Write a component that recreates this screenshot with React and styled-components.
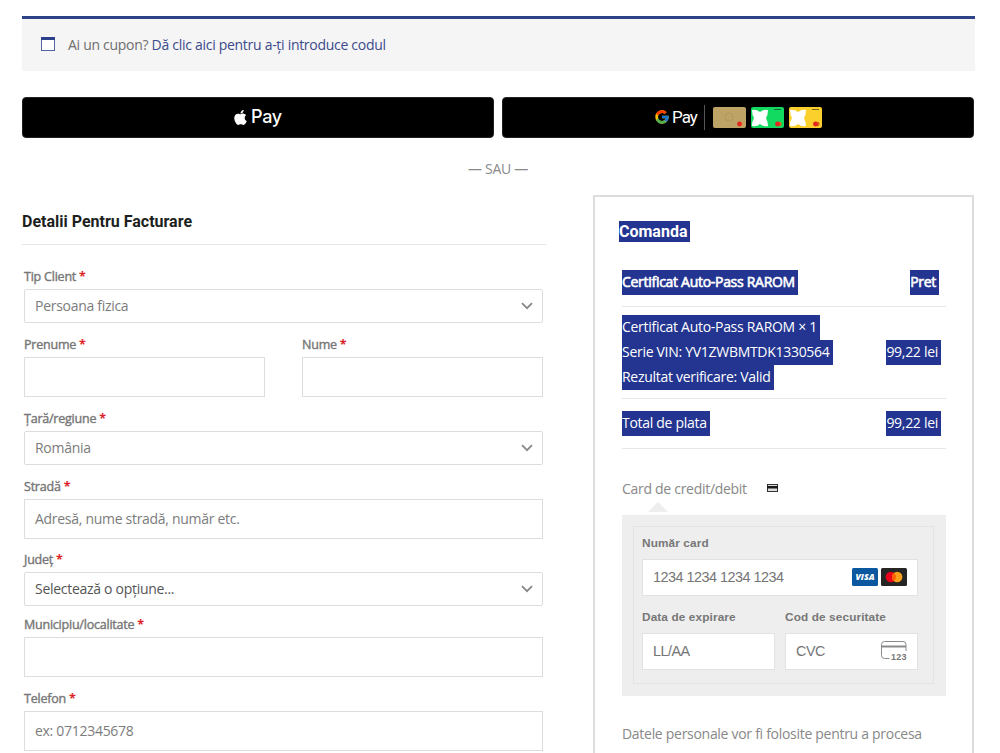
import React from 'react';
import styled, { createGlobalStyle } from 'styled-components';
import { FaApple } from 'react-icons/fa';
import { FcGoogle } from 'react-icons/fc';

const GlobalStyle = createGlobalStyle`
  * {
    box-sizing: border-box;
  }
  body {
    margin: 0;
    background: #fff;
    color: #777;
    font-family: 'Open Sans', sans-serif;
    font-size: 14px;
    letter-spacing: -0.29px;
  }
`;

const Page = styled.div`
  height: 753px;
  overflow: hidden;
  padding: 16px 26px 0 22px;
`;

const Coupon = styled.div`
  display: flex;
  align-items: center;
  height: 55px;
  margin-right: -1px;
  padding: 0 0 2px 19px;
  border-top: 3px solid #2e4287;
  background: #f5f5f5;
  color: #6f6f6f;
  white-space: pre;

  svg {
    margin-right: 13px;
  }
  a {
    color: #3c4a8c;
  }
`;

const Wallets = styled.div`
  display: flex;
  gap: 8px;
  margin-top: 26px;
`;

const WalletButton = styled.button`
  display: flex;
  flex: 1;
  align-items: center;
  justify-content: center;
  height: 41px;
  padding: 0 0 1px;
  border: 1px solid #222;
  border-radius: 4px;
  background: #000;
  color: #fff;
  font-family: ${({ $font }) => $font}, sans-serif;
  font-size: ${({ $size }) => $size};
  font-weight: ${({ $weight = 400 }) => $weight};
  letter-spacing: ${({ $spacing }) => $spacing};
  line-height: 20px;
`;

const AppleMark = styled.span`
  display: flex;
  align-items: center;
  gap: 2px;
  margin-right: 2px;
`;

const GoogleMark = styled.span`
  display: flex;
  align-items: center;
  gap: 2px;
  height: 25px;
  margin-right: 8px;
  padding-right: 7px;
  border-right: 1px solid #555;
`;

const MiniCards = styled.span`
  display: flex;
  gap: 5px;
`;

const Separator = styled.p`
  margin: 21px 0 16px;
  color: #8a8a8a;
  line-height: 20px;
  text-align: center;
`;

const Columns = styled.div`
  display: flex;
  justify-content: space-between;
`;

const Billing = styled.form`
  width: 524px;
`;

const Title = styled.h3`
  margin: 0;
  color: #1d1f20;
  font: bold 16px/20px Roboto, sans-serif;
  letter-spacing: 0;
`;

const BillingTitle = styled(Title)`
  height: 50px;
  padding-top: 17px;
  border-bottom: 1px solid #e6e6e6;
`;

const Fields = styled.div`
  padding: 19px 3px 0 2px;
`;

const FieldRow = styled.div`
  display: flex;
  gap: 37px;
`;

const Field = styled.div`
  flex: 1;
  margin-bottom: ${({ $gap = 9 }) => $gap}px;

  label {
    display: block;
    height: 25px;
    color: #777;
    font-size: 12.5px;
    letter-spacing: -0.22px;
    line-height: 25px;
    -webkit-text-stroke: 0.4px currentColor;
  }
  abbr {
    color: #dc1f28;
    font-weight: 700;
    -webkit-text-stroke: 0;
  }
`;

const Control = styled.div`
  display: flex;
  align-items: center;
  justify-content: space-between;
  height: ${({ $select }) => ($select ? 34 : 40)}px;
  padding: 0 9px 0 10px;
  border: 1px solid #ddd;
  border-radius: ${({ $select }) => ($select ? 2 : 0)}px;
  color: ${({ $dark }) => ($dark ? '#555' : '#7c7c7c')};

  span {
    padding-bottom: 2px;
  }
`;

const Order = styled.section`
  width: 381px;
  height: 600px;
  padding: 24px 26px 0 27px;
  border: 2px solid #ddd;
`;

const Marked = styled.span`
  display: block;
  width: fit-content;
  padding-right: 3px;
  background: #233590;
  color: #fff;
`;

const OrderTitle = styled(Title)`
  height: 45px;
  margin-left: -3px;
  line-height: 21px;
`;

const OrderRow = styled.div`
  display: flex;
  align-items: center;
  justify-content: space-between;
  height: ${({ $height }) => $height}px;
  padding-right: 5px;
  border-bottom: 1px solid #e6e6e2;
  line-height: 24.7px;
`;

const OrderHead = styled(OrderRow)`
  padding: 0 7px 7px 0;
  -webkit-text-stroke: 0.6px #fff;
`;

const Method = styled.div`
  display: flex;
  align-items: center;
  gap: 20px;
  height: 20px;
  margin-top: 29px;
  color: #888;
`;

const Arrow = styled.div`
  width: 0;
  margin: 4px 0 3px 26px;
  border: 10px solid transparent;
  border-top: 0;
  border-bottom: 10px solid #eee;
`;

const PaymentBox = styled.div`
  height: 181px;
  padding: 11px 12px 12px 11px;
  background: #eee;
`;

const CardForm = styled.div`
  height: 158px;
  padding: 5px 15px 0 8px;
  border: 1px solid #e3e3e3;
  font-family: 'Liberation Sans', sans-serif;

  label {
    display: block;
    height: 27px;
    font-size: 11.8px;
    font-weight: bold;
    letter-spacing: 0.12px;
    line-height: 22px;
  }
`;

const CardInput = styled.div`
  display: flex;
  align-items: center;
  height: 37px;
  padding: 0 10px 1px;
  border: 1px solid #e2e2e2;
  background: #fff;
  color: #757575;
  font-size: 14.4px;
  letter-spacing: -0.5px;

  svg:first-of-type {
    margin-left: auto;
  }
  svg + svg {
    margin-left: 3px;
  }
`;

const CardPair = styled.div`
  display: grid;
  grid-template-columns: 1fr 1fr;
  gap: 10px;
  margin-top: 10px;
`;

const Privacy = styled.p`
  margin: 25px 0 0;
  color: #888;
  line-height: 25px;
  white-space: nowrap;
`;

const Chevron = () => (
  <svg width="12" height="8" viewBox="0 0 12 8" fill="none" stroke="#888" strokeWidth="1.8">
    <path d="M1 1.2 6 6.2 11 1.2" />
  </svg>
);

const CalendarIcon = () => (
  <svg width="14" height="14" viewBox="0 0 14 14">
    <rect x=".5" y=".5" width="13" height="13" fill="#fff" stroke="#5264a3" />
    <path d="M0 0h14v3H0z" fill="#2c3f88" />
  </svg>
);

const MiniCard = ({ color, cross }) => (
  <svg width="33" height="21" viewBox="0 0 33 21">
    <rect width="33" height="21" rx="2" fill={color} />
    {cross ? (
      <>
        <path
          d="M1 3Q5 2 9 5Q13 2 17 3Q17 8 15 11Q17 15 17 19Q12 20 9 17Q6 20 1 19Q1 14 3 11Q1 8 1 3Z"
          fill="#fff"
        />
        <path d="M23 2.5h7" stroke="#000" strokeOpacity=".5" />
      </>
    ) : (
      <circle cx="16" cy="10" r="4" fill="none" stroke="#b09858" />
    )}
    <circle cx="28.5" cy="17" r="2.2" fill={cross ? '#d8661c' : '#d89a50'} />
    <circle cx="26.5" cy="17" r="2.4" fill="#e3261f" />
  </svg>
);

const BlackCard = () => (
  <svg width="11" height="8" viewBox="0 0 11 8">
    <rect x=".5" y=".5" width="10" height="7" fill="#ddd" stroke="#333" />
    <path d="M0 2h11v2.500H0z" fill="#1a1a1a" />
  </svg>
);

const Visa = () => (
  <svg width="26" height="18" viewBox="0 0 26 18">
    <rect width="26" height="18" rx="1.5" fill="#0b57a0" />
    <text
      x="13"
      y="12.4"
      fill="#fff"
      fontFamily="Open Sans, sans-serif"
      fontSize="9.5"
      fontStyle="italic"
      fontWeight="800"
      letterSpacing="0"
      textAnchor="middle"
      textLength="19"
      lengthAdjust="spacingAndGlyphs"
    >
      VISA
    </text>
  </svg>
);

const Mastercard = () => (
  <svg width="26" height="18" viewBox="0 0 26 18">
    <rect width="26" height="18" rx="1.5" fill="#252525" />
    <circle cx="9.8" cy="9" r="5.2" fill="#eb001b" />
    <circle cx="16.2" cy="9" r="5.2" fill="#f79e1b" />
    <path d="M13 4.900a5.200 5.200 0 0 1 0 8.200a5.200 5.200 0 0 1 0-8.200z" fill="#ff5f00" />
  </svg>
);

const CvcIcon = () => (
  <svg width="26" height="20" viewBox="0 0 26 20">
    <path
      d="M8.5 17.5H3.5a3 3 0 0 1-3-3V3.500a3 3 0 0 1 3-3h18.500a3 3 0 0 1 3 3V10"
      fill="none"
      stroke="#8a8a8a"
    />
    <path d="M.5 5.500h24.500" stroke="#8a8a8a" strokeWidth="2" />
    <text
      x="10"
      y="18.500"
      fill="#777"
      fontFamily="Liberation Sans, sans-serif"
      fontSize="9"
      fontWeight="bold"
      letterSpacing="0"
      textLength="15.500"
    >
      123
    </text>
  </svg>
);

const FormField = ({ label, value, select, dark, gap }) => (
  <Field $gap={gap}>
    <label>
      {label} <abbr>*</abbr>
    </label>
    <Control $select={select} $dark={dark}>
      <span>{value}</span>
      {select && <Chevron />}
    </Control>
  </Field>
);

const App = () => (
  <>
    <GlobalStyle />
    <Page>
      <Coupon>
        <CalendarIcon />
        Ai un cupon? <a>Dă clic aici pentru a-ți introduce codul</a>
      </Coupon>

      <Wallets>
        <WalletButton $font="Inter" $size="18px" $weight={500} $spacing="-0.3px">
          <AppleMark>
            <FaApple size={17} />
            Pay
          </AppleMark>
        </WalletButton>
        <WalletButton $font="Roboto" $size="17px" $spacing="-1px">
          <GoogleMark>
            <FcGoogle size={16} />
            Pay
          </GoogleMark>
          <MiniCards>
            <MiniCard color="#bda466" />
            <MiniCard color="#12d95f" cross />
            <MiniCard color="#fbd02c" cross />
          </MiniCards>
        </WalletButton>
      </Wallets>

      <Separator>— SAU —</Separator>

      <Columns>
        <Billing>
          <BillingTitle>Detalii Pentru Facturare</BillingTitle>
          <Fields>
            <FormField label="Tip Client" value="Persoana fizica" select />
            <FieldRow>
              <FormField label="Prenume" />
              <FormField label="Nume" />
            </FieldRow>
            <FormField label="Țară/regiune" value="România" select />
            <FormField label="Stradă" value="Adresă, nume stradă, număr etc." gap={8} />
            <FormField label="Județ" value="Selectează o opțiune..." select dark gap={6} />
            <FormField label="Municipiu/localitate" />
            <FormField label="Telefon" value="ex: 0712345678" />
          </Fields>
        </Billing>

        <Order>
          <OrderTitle>
            <Marked>Comanda</Marked>
          </OrderTitle>
          <OrderHead $height={41}>
            <Marked>Certificat Auto-Pass RAROM</Marked>
            <Marked>Pret</Marked>
          </OrderHead>
          <OrderRow $height={92}>
            <div>
              <Marked>Certificat Auto-Pass RAROM × 1</Marked>
              <Marked>Serie VIN: YV1ZWBMTDK1330564</Marked>
              <Marked>Rezultat verificare: Valid</Marked>
            </div>
            <Marked>99,22 lei</Marked>
          </OrderRow>
          <OrderRow $height={50}>
            <Marked>Total de plata</Marked>
            <Marked>99,22 lei</Marked>
          </OrderRow>

          <Method>
            Card de credit/debit
            <BlackCard />
          </Method>
          <Arrow />
          <PaymentBox>
            <CardForm>
              <label>Număr card</label>
              <CardInput>
                1234 1234 1234 1234
                <Visa />
                <Mastercard />
              </CardInput>
              <CardPair>
                <div>
                  <label>Data de expirare</label>
                  <CardInput>LL/AA</CardInput>
                </div>
                <div>
                  <label>Cod de securitate</label>
                  <CardInput>
                    CVC
                    <CvcIcon />
                  </CardInput>
                </div>
              </CardPair>
            </CardForm>
          </PaymentBox>
          <Privacy>
            Datele personale vor fi folosite pentru a procesa
            <br />
            comanda, pentru o bună funcționare
          </Privacy>
        </Order>
      </Columns>
    </Page>
  </>
);

export default App;
